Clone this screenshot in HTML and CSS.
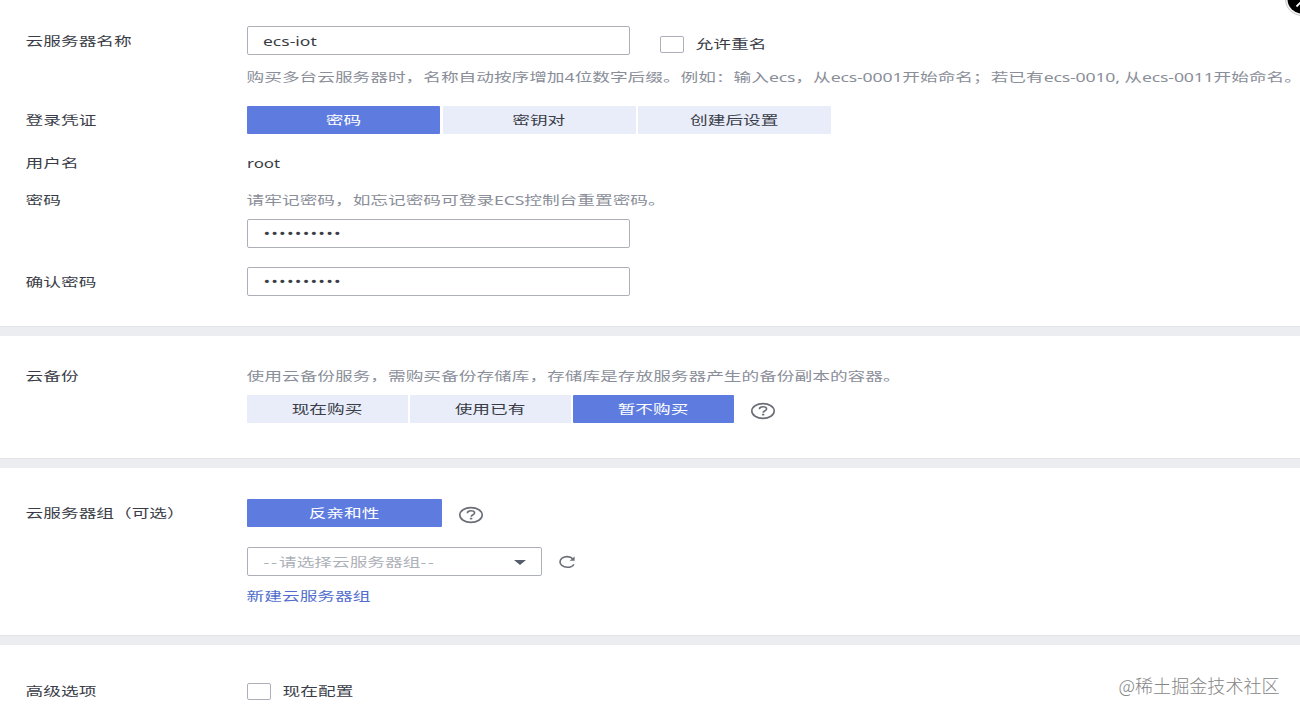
FILE: index.html
```html
<!DOCTYPE html>
<html lang="zh-CN">
<head>
<meta charset="utf-8">
<title>云服务器配置</title>
<link rel="stylesheet" href="styles.css">
</head>
<body>
<main class="page">
  <section class="panel login">
    <div class="row name-row">
      <label class="label"><span class="t">云服务器名称</span></label>
      <div class="content">
        <div class="line">
          <div class="input"><span class="t">ecs-iot</span></div>
          <div class="check allow"><i class="box"></i><span class="t">允许重名</span></div>
        </div>
        <p class="hint name-hint"><span class="t">购买多台云服务器时，名称自动按序增加4位数字后缀。例如：输入<span class="code">ecs</span>，从<span class="code">ecs-0001</span>开始命名；若已有<span class="code">ecs-0010, </span>从<span class="code">ecs-0011</span>开始命名。</span></p>
      </div>
    </div>
    <div class="row cred-row">
      <label class="label"><span class="t">登录凭证</span></label>
      <div class="tabs wide">
        <div class="tab active"><span class="t">密码</span></div>
        <div class="tab"><span class="t">密钥对</span></div>
        <div class="tab"><span class="t">创建后设置</span></div>
      </div>
    </div>
    <div class="row user-row">
      <label class="label"><span class="t">用户名</span></label>
      <div class="value"><span class="t">root</span></div>
    </div>
    <div class="row pass-row">
      <label class="label"><span class="t">密码</span></label>
      <div class="content">
        <p class="hint"><span class="t">请牢记密码，如忘记密码可登录<span class="code">ECS</span>控制台重置密码。</span></p>
        <div class="input"><span class="t dots">••••••••••</span></div>
      </div>
    </div>
    <div class="row confirm-row">
      <label class="label"><span class="t">确认密码</span></label>
      <div class="input"><span class="t dots">••••••••••</span></div>
    </div>
  </section>

  <section class="panel backup">
    <div class="row">
      <label class="label"><span class="t">云备份</span></label>
      <div class="content">
        <p class="hint"><span class="t">使用云备份服务，需购买备份存储库，存储库是存放服务器产生的备份副本的容器。</span></p>
        <div class="line">
          <div class="tabs">
            <div class="tab"><span class="t">现在购买</span></div>
            <div class="tab"><span class="t">使用已有</span></div>
            <div class="tab active"><span class="t">暂不购买</span></div>
          </div>
          <svg class="help" viewBox="0 0 26 18"><ellipse cx="13" cy="9" rx="11.2" ry="7.4"/><path d="M9.4 7.2C9.4 5.5 10.9 4.8 13 4.8s3.6.8 3.6 2.2c0 1.7-3.4 1.7-3.4 3.7"/><path d="M11.9 12.6h2.4"/></svg>
        </div>
      </div>
    </div>
  </section>

  <section class="panel group">
    <div class="row">
      <label class="label"><span class="t">云服务器组（可选）</span></label>
      <div class="content">
        <div class="line">
          <div class="tab active affinity"><span class="t">反亲和性</span></div>
          <svg class="help" viewBox="0 0 26 18"><ellipse cx="13" cy="9" rx="11.2" ry="7.4"/><path d="M9.4 7.2C9.4 5.5 10.9 4.8 13 4.8s3.6.8 3.6 2.2c0 1.7-3.4 1.7-3.4 3.7"/><path d="M11.9 12.6h2.4"/></svg>
        </div>
        <div class="line select-line">
          <div class="input select"><span class="t"><span class="dash">--</span>请选择云服务器组<span class="dash">--</span></span><i class="caret"></i></div>
          <svg class="refresh" viewBox="0 0 18 14"><path class="arc" d="M15.2 4.2C13.8 2.6 11.8 1.6 9.2 1.6c-4 0-7.2 2.3-7.2 5.3s3.2 5.4 7.2 5.4c3 0 5.6-1.2 6.7-3"/><path class="tip" d="M16.6 1.6v4.2h-5z"/></svg>
        </div>
        <a class="link"><span class="t">新建云服务器组</span></a>
      </div>
    </div>
  </section>

  <section class="panel advanced">
    <div class="row">
      <label class="label"><span class="t">高级选项</span></label>
      <div class="check"><i class="box"></i><span class="t">现在配置</span></div>
    </div>
  </section>
</main>
<svg class="close" viewBox="0 0 16 18"><circle class="ring" cx="18" cy="-1" r="16.5"/><circle class="disc" cx="18" cy="-1" r="14.5"/><path d="M12.5 6.5L20-1M17 1l6 6"/></svg>
<div class="watermark">@稀土掘金技术社区</div>
</body>
</html>
```
FILE: styles.css
```css
* { box-sizing: border-box; }
body {
  margin: 0;
  background: #fff;
  color: #3a3d47;
  font: 12.5px/20px "Noto Sans", "Noto Sans CJK SC", sans-serif;
}
.page { width: 1300px; height: 717px; overflow: hidden; }
p { margin: 0; }

/* Wide lettering: glyphs are stretched horizontally */
.t {
  display: inline-block;
  white-space: nowrap;
  transform: translate(-.4px, 1.4px) scaleX(1.414);
  transform-origin: 0 50%;
}
.tab .t { transform: translate(0, 1.4px) scaleX(1.414); transform-origin: 50% 50%; }

.panel {
  padding-left: 26px;
  border-bottom: 9px solid #ecedf0;
  box-shadow: inset 0 -1px 0 #e2e4e7;
}
.login { height: 336px; padding-top: 26px; }
.backup { height: 132px; padding-top: 30px; }
.group { height: 177px; padding-top: 31px; }
.advanced { height: 72px; padding-top: 36px; border: 0; box-shadow: none; }

.row { display: grid; grid-template-columns: 221px 1fr; align-items: start; }
.label { display: block; height: 20px; }
.line { display: flex; align-items: flex-start; }

.input {
  display: flex;
  align-items: center;
  width: 383px;
  height: 29px;
  padding-left: 16px;
  border: 1px solid #adb0b8;
  border-radius: 2px;
}
.input .t { transform: translate(-1px, .6px) scaleX(1.4); }
.hint { color: #8a8e99; height: 20px; }
.name-hint .t { transform: translate(-.4px, 1.4px) scaleX(1.413); }
.code { letter-spacing: -.12px; }
.input .dots { letter-spacing: .85px; transform: translate(-.6px, .8px) scaleX(1.414); }

.check { display: flex; align-items: center; height: 20px; }
.box {
  width: 24px;
  height: 17px;
  margin-right: 12px;
  border: 1px solid #adb0b8;
  border-radius: 2px;
}
.allow { margin: 8px 0 0 30px; }

.tabs { display: grid; grid-template-columns: repeat(3, 161px); column-gap: 2px; }
.tabs.wide { grid-template-columns: repeat(3, 193px); column-gap: 2.5px; }
.tab {
  display: flex;
  align-items: center;
  justify-content: center;
  height: 28px;
  background: #e9edfa;
  border-radius: 1px;
}
.tab.active { background: #5e7ce0; color: #fff; }
.affinity { width: 194.5px; }

.name-row .label { margin-top: 5px; }
.name-hint { margin-top: 12px; }
.cred-row { margin-top: 19.4px; }
.cred-row .label { margin-top: 4px; }
.user-row { margin-top: 18.6px; }
.value .t { transform: translate(0, 1.4px) scaleX(1.35); }
.pass-row { margin-top: 17px; }
.pass-row .input { margin-top: 9px; }
.confirm-row { margin-top: 19px; }
.confirm-row .label { margin-top: 5px; }
.backup .line { margin-top: 9px; }
.group .label { margin-top: 4px; }
.select-line { margin-top: 20px; }
.link { display: block; margin-top: 10px; color: #526ecc; }

.select { width: 295px; color: #adb0b8; position: relative; }
.select .t { transform: translate(-.4px, .6px) scaleX(1.414); }
.dash { letter-spacing: 1.4px; }
.caret {
  position: absolute;
  right: 15px;
  top: 12px;
  border: solid transparent;
  border-width: 5px 6px 0;
  border-top-color: #575d6c;
}
.help {
  width: 26px;
  height: 18px;
  margin: 7px 0 0 16px;
  fill: none;
  stroke: #6b6e76;
  stroke-width: 1.6;
}
.refresh { width: 18px; height: 14px; margin: 8px 0 0 16px; }
.refresh .arc { fill: none; stroke: #6b6e76; stroke-width: 1.6; }
.refresh .tip { fill: #6b6e76; }

.close { position: absolute; right: 0; top: 0; width: 16px; height: 18px; }
.close .ring { fill: #f4f4f4; stroke: #c8c8c8; }
.close .disc { fill: #000; }
.close path { stroke: #fff; stroke-width: 1.8; }
.watermark {
  position: absolute;
  left: 1118.5px;
  top: 672px;
  font: 18.1px/26px "Noto Sans CJK SC", sans-serif;
  font-weight: 300;
  color: #858585;
  white-space: nowrap;
}
```
